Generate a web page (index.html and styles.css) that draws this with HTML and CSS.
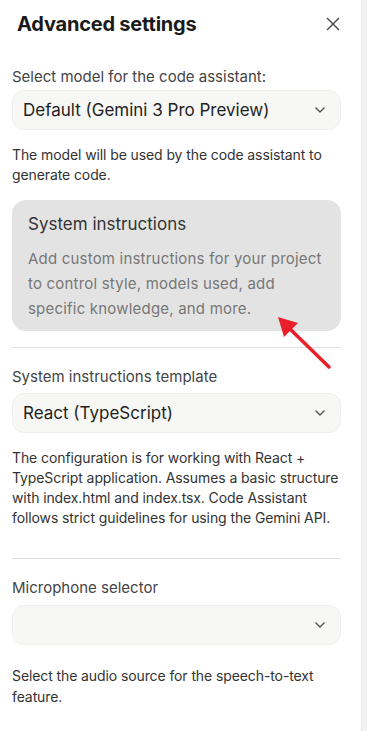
FILE: index.html
```html
<!DOCTYPE html>
<html>
<head>
  <title>Advanced settings</title>
  <link rel="stylesheet" href="styles.css">
</head>
<body>
  <div class="panel">
    <div class="header">
      <h1 class="title">Advanced settings</h1>
      <button class="close-button" aria-label="Close">
        <svg width="14" height="14" viewBox="0 0 14 14" fill="none" stroke="currentColor" stroke-width="1.4">
          <path d="M1 1l12 12M13 1L1 13"/>
        </svg>
      </button>
    </div>

    <div class="field field-first">
      <label class="label">Select model for the code assistant:</label>
      <div class="select">
        <span class="select-value">Default (Gemini 3 Pro Preview)</span>
        <svg class="chevron" width="12" height="8" viewBox="0 0 12 8" fill="none" stroke="currentColor" stroke-width="1.4">
          <path d="M1.5 1.5l4.5 4.5 4.5-4.5"/>
        </svg>
      </div>
      <p class="help">The model will be used by the code assistant to generate code.</p>
    </div>

    <div class="instructions-card">
      <div class="card-title">System instructions</div>
      <div class="card-text">Add custom instructions for your project to control style, models used, add specific knowledge, and more.</div>
    </div>

    <hr class="divider">

    <div class="field">
      <label class="label">System instructions template</label>
      <div class="select">
        <span class="select-value">React (TypeScript)</span>
        <svg class="chevron" width="12" height="8" viewBox="0 0 12 8" fill="none" stroke="currentColor" stroke-width="1.4">
          <path d="M1.5 1.5l4.5 4.5 4.5-4.5"/>
        </svg>
      </div>
      <p class="help">The configuration is for working with React + TypeScript application. Assumes a basic structure with index.html and index.tsx. Code Assistant follows strict guidelines for using the Gemini API.</p>
    </div>

    <hr class="divider divider-wide">

    <div class="field">
      <label class="label">Microphone selector</label>
      <div class="select select-spaced">
        <span class="select-value"></span>
        <svg class="chevron" width="12" height="8" viewBox="0 0 12 8" fill="none" stroke="currentColor" stroke-width="1.4">
          <path d="M1.5 1.5l4.5 4.5 4.5-4.5"/>
        </svg>
      </div>
      <p class="help help-last">Select the audio source for the speech-to-text feature.</p>
    </div>

    <svg class="annotation-arrow" width="60" height="60" viewBox="0 0 60 60">
      <path d="M54 55L14 16" stroke="#e8202a" stroke-width="3.5" stroke-linecap="round"/>
      <path d="M3 5L23 11L9 25Z" fill="#e8202a"/>
    </svg>
  </div>
</body>
</html>
```

FILE: styles.css
```css
:root {
  --text-primary: #1f1f1f;
  --text-label: #444;
  --text-help: #333;
  --text-muted: #777;
  --field-bg: #f7f7f6;
  --field-border: #efefed;
  --card-bg: #e3e3e3;
  --border: #dedede;
}

body {
  margin: 0;
  padding: 0;
  background: #f2f2f2;
  font-family: Inter, 'Noto Sans', sans-serif;
  color: var(--text-primary);
}

.panel {
  position: relative;
  width: 362px;
  min-height: 731px;
  box-sizing: border-box;
  padding: 0 20px 0 12px;
  background: #fff;
  border-right: 1px solid #e6e6e6;
}

.header {
  display: flex;
  align-items: center;
  justify-content: space-between;
  height: 48px;
  padding-left: 5px;
}

.title {
  margin: 0;
  font-size: 20px;
  font-weight: 700;
  letter-spacing: -0.2px;
  color: #1a1a1a;
}

.close-button {
  display: flex;
  align-items: center;
  justify-content: center;
  width: 30px;
  height: 30px;
  margin-right: -7px;
  padding: 0;
  border: none;
  background: none;
  color: #444;
}

.field {
  display: flex;
  flex-direction: column;
  padding-top: 19px;
}

.label {
  font-size: 15px;
  line-height: 20px;
  color: var(--text-label);
}

.select {
  display: flex;
  align-items: center;
  justify-content: space-between;
  height: 40px;
  margin-top: 6px;
  padding: 0 14px 0 10px;
  box-sizing: border-box;
  background: var(--field-bg);
  border: 1px solid var(--field-border);
  border-radius: 12px;
}

.field-first .select {
  margin-top: 3px;
}

.select-spaced {
  margin-top: 7px;
}

.select-value {
  font-size: 17px;
  color: var(--text-primary);
}

.chevron {
  color: #555;
}

.help {
  margin: 15px 0 0;
  font-size: 14px;
  line-height: 20px;
  color: var(--text-help);
  letter-spacing: -0.1px;
}

.help-last {
  margin-top: 20px;
  line-height: 21px;
}

.instructions-card {
  margin-top: 15px;
  padding: 13px 16px 10px;
  background: var(--card-bg);
  border-radius: 14px;
}

.card-title {
  font-size: 17px;
  line-height: 22px;
  color: #333;
}

.card-text {
  margin-top: 11px;
  font-size: 15px;
  line-height: 25px;
  color: var(--text-muted);
  letter-spacing: 0.2px;
}

.divider {
  margin: 16px 0 0;
  border: none;
  border-top: 1px solid var(--border);
}

.divider-wide {
  margin-top: 30px;
}

.annotation-arrow {
  position: absolute;
  left: 275px;
  top: 312px;
}
```
